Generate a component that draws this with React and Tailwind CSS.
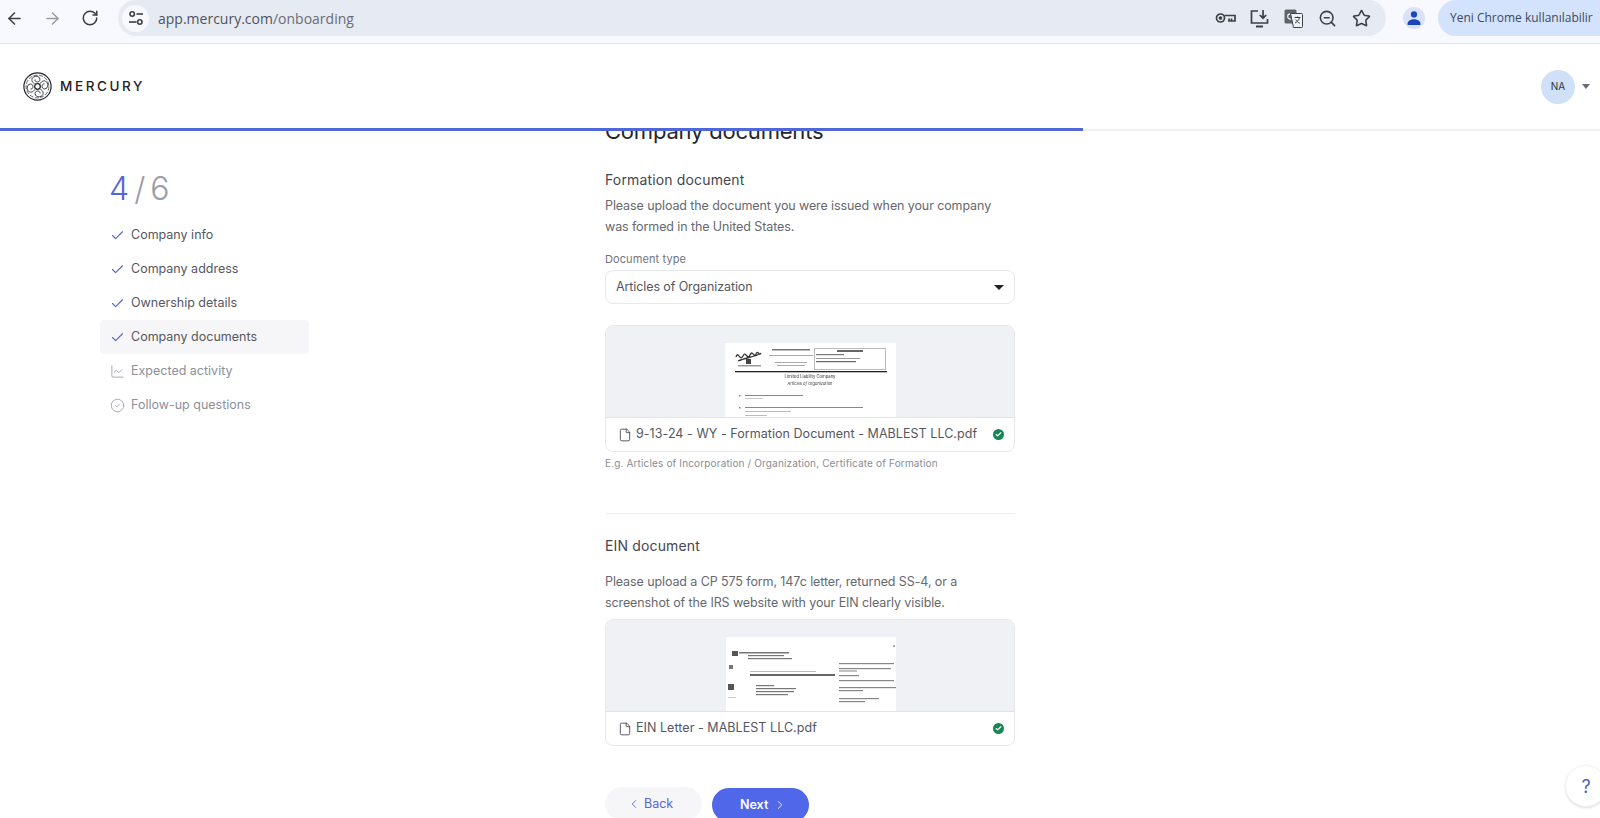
import React from 'react';
import { ArrowLeft, ArrowRight, RotateCw, Star, ZoomOut, Check, ChevronLeft, ChevronRight, File, CircleCheck, ChartLine } from 'lucide-react';

const STEPS = [
    { label: 'Company info', done: true },
    { label: 'Company address', done: true },
    { label: 'Ownership details', done: true },
    { label: 'Company documents', done: true, active: true },
    { label: 'Expected activity', icon: <ChartLine size={15} strokeWidth={1.2} /> },
    { label: 'Follow-up questions', icon: <CircleCheck size={15} strokeWidth={1.2} /> },
];

const TuneIcon = () => (
    <svg width="16" height="16" viewBox="0 0 16 16" fill="none" stroke="#3c4043" strokeWidth="1.6">
        <circle cx="4.2" cy="4" r="2.2" />
        <path d="M8.5 4H15" />
        <circle cx="11.8" cy="12" r="2.2" />
        <path d="M1 12h7.5" />
    </svg>
);

const KeyIcon = () => (
    <svg width="21" height="12" viewBox="0 0 21 12" fill="none" stroke="#3c4043" strokeWidth="1.7">
        <circle cx="5.5" cy="6" r="4" />
        <circle cx="5.5" cy="6" r="1" fill="#3c4043" />
        <path d="M9.5 3.5h10.500V9h-6V6.500M16.500 9V6.500" />
    </svg>
);

const InstallIcon = () => (
    <svg width="19" height="19" viewBox="0 0 19 19" fill="none" stroke="#3c4043" strokeWidth="1.7">
        <path d="M8 2H1.5v12h16V10" />
        <path d="M6 17.5h7" strokeWidth="2" />
        <path d="M13 1v8M9.8 6l3.2 3.2L16.2 6" />
    </svg>
);

const TranslateIcon = () => (
    <svg width="19" height="19" viewBox="0 0 19 19">
        <rect x="0.5" y="0.5" width="12" height="14" rx="1.5" fill="#5f6368" />
        <circle cx="6.3" cy="7.5" r="2.6" fill="none" stroke="#eef1f7" strokeWidth="1.2" />
        <path d="M6.5 4.5h11a1 1 0 0 1 1 1v12a1 1 0 0 1-1 1h-8z" fill="#eef1f7" stroke="#3c4043" strokeWidth="1" />
        <path d="M10.5 8.5h6M13.5 7.5v1M15.5 8.5c-.6 2.5-2.2 4.500-4.500 5.500M11.800 10.500c.8 1.600 2.200 3 4 3.800" fill="none" stroke="#3c4043" strokeWidth="1" />
    </svg>
);

const ProfileIcon = () => (
    <svg width="14" height="14" viewBox="0 0 14 14" fill="#1a47b8">
        <circle cx="7" cy="3.4" r="3.1" />
        <path d="M0.6 14v-1.6C0.6 9.8 4 8.2 7 8.2s6.4 1.6 6.4 4.2V14z" />
    </svg>
);

// Mercury mark: ring filled with looping knots around a center
const MercuryLogo = () => (
    <svg width="29" height="29" viewBox="0 0 29 29" fill="none" stroke="#24262b" strokeWidth="0.9">
        <circle cx="14.5" cy="14.5" r="13.6" strokeWidth="1.2" />
        <circle cx="14.5" cy="14.5" r="11.4" strokeWidth="0.7" strokeDasharray="4 1.5" />
        <circle cx="14.5" cy="14.5" r="2.8" strokeWidth="1.3" />
        <path d="M11.500 11.500c-3-1-3.500-5-1-6.500s5-1 6 1 0 4-2 4-3-1.500-2.500-2.500" />
        <path d="M17.500 11.500c1-3 5-3.500 6.500-1s1 5-1 6-4 0-4-2 1.500-3 2.500-2.500" />
        <path d="M17.500 17.500c3 1 3.500 5 1 6.500s-5 1-6-1 0-4 2-4 3 1.500 2.500 2.500" />
        <path d="M11.500 17.500c-1 3-5 3.500-6.500 1s-1-5 1-6 4 0 4 2-1.500 3-2.500 2.500" />
    </svg>
);

const FormationThumb = () => (
    <svg width="171" height="74" viewBox="0 0 171 74" className="block blur-[0.4px]">
        <rect width="171" height="74" fill="#fff" />
        <path d="M11 14c2-7 4 5 7-1s4 5 7-1 4 4 6-1 3 3 5-1M13 18c7-3 15-4 22-7" fill="none" stroke="#333" strokeWidth="1.300" />
        <rect x="21" y="16" width="5" height="5" fill="#444" />
        <rect x="13" y="22" width="23" height="1.500" fill="#999" />
        <g fill="#aaa">
            <rect x="47" y="6" width="38" height="1.500" fill="#777" />
            <rect x="44" y="12" width="44" height="1" />
            <rect x="50" y="19" width="32" height="1" />
            <rect x="52" y="22" width="28" height="1" />
        </g>
        <rect x="89.500" y="5.500" width="71" height="21" fill="none" stroke="#bbb" />
        <rect x="112" y="7" width="26" height="2" fill="#666" />
        <rect x="91" y="11" width="28" height="1.200" fill="#777" />
        <rect x="91" y="15" width="44" height="1" fill="#999" />
        <rect x="91" y="18" width="40" height="1.200" fill="#666" />
        <rect x="10" y="28" width="152" height="1.300" fill="#222" />
        <text x="85" y="35" textAnchor="middle" fontSize="4.200" fontFamily="Inter, sans-serif" fill="#333">Limited Liability Company</text>
        <text x="85" y="42" textAnchor="middle" fontSize="4" fontFamily="Inter, sans-serif" fontStyle="italic" fill="#333">Articles of Organization</text>
        <g fill="#888">
            <rect x="14" y="52" width="1.500" height="1.500" />
            <rect x="20" y="52" width="58" height="1" />
            <rect x="20" y="55" width="18" height="1" fill="#ccc" />
            <rect x="14" y="64" width="1.500" height="1.500" />
            <rect x="20" y="64" width="118" height="1" />
            <rect x="20" y="68" width="46" height="1" fill="#bbb" />
            <rect x="20" y="72" width="22" height="1" fill="#bbb" />
        </g>
    </svg>
);

const EinThumb = () => (
    <svg width="170" height="74" viewBox="0 0 170 74" className="block blur-[0.4px]">
        <rect width="170" height="74" fill="#fff" />
        <rect x="6" y="14" width="6" height="5" fill="#555" />
        <g fill="#777">
            <rect x="13" y="15" width="50" height="1.500" />
            <rect x="22" y="18" width="36" height="1.200" />
            <rect x="22" y="21" width="44" height="1.200" />
            <rect x="3" y="28" width="4" height="4" />
            <rect x="24" y="34" width="66" height="1" fill="#bbb" />
            <rect x="24" y="37" width="85" height="2" fill="#666" />
            <rect x="2" y="47" width="6" height="6" fill="#555" />
            <rect x="30" y="48" width="18" height="1.200" />
            <rect x="30" y="51" width="40" height="1.200" />
            <rect x="30" y="54" width="38" height="1.200" />
            <rect x="30" y="57" width="32" height="1.200" />
            <rect x="2" y="60" width="8" height="1" fill="#ccc" />
        </g>
        <g fill="#888">
            <rect x="113" y="26" width="55" height="1.200" />
            <rect x="113" y="31" width="52" height="1.200" />
            <rect x="113" y="33.500" width="18" height="1" />
            <rect x="113" y="38" width="20" height="1.200" />
            <rect x="113" y="43" width="55" height="1.200" />
            <rect x="113" y="50" width="57" height="1.200" />
            <rect x="113" y="53" width="24" height="1.200" />
            <rect x="113" y="61" width="40" height="1.200" />
            <rect x="113" y="64" width="26" height="1.200" />
            <rect x="167" y="8" width="2" height="2" fill="#aaa" />
        </g>
    </svg>
);

const FileCard = ({ name, thumb }) => (
    <div className="rounded-lg border border-[#e7e8ee] bg-white overflow-hidden">
        <div className="h-[92px] bg-[#f0f1f4] border-b border-[#e2e3e8] flex justify-center items-end pl-[1px] overflow-hidden">
            {thumb}
        </div>
        <div className="h-[33px] flex items-center pl-[12px] pr-[10px]">
            <File size={14} strokeWidth={1.5} className="shrink-0 text-[#45474f]" />
            <span className="ml-[4px] flex-1 text-[12.5px] tracking-[0.05px] text-[#55575f] whitespace-nowrap">{name}</span>
            <span className="w-[11px] h-[11px] shrink-0 rounded-full bg-[#188554] flex items-center justify-center">
                <Check size={7} strokeWidth={4} className="text-white" />
            </span>
        </div>
    </div>
);

const ToolbarSlot = ({ children }) => (
    <div className="w-[34px] flex items-center justify-center">{children}</div>
);

const App = () => {
    return (
        <div className="h-screen w-full flex flex-col overflow-hidden bg-white font-['Inter',sans-serif]">
            {/* Browser toolbar */}
            <div className="h-[44px] shrink-0 bg-[#f8f9fe] border-b border-[#e3e4ea] flex items-start">
                <div className="h-[36px] w-[118px] flex items-center pl-[5px] gap-[19px] text-[#3c4043]">
                    <ArrowLeft size={19} strokeWidth={2} />
                    <ArrowRight size={19} strokeWidth={2} className="text-[#9a9ca3]" />
                    <RotateCw size={18} strokeWidth={2} />
                </div>
                <div className="h-[36px] w-[1268px] rounded-[18px] bg-[#e6eaf3] flex items-center pl-[4px] pr-[8px]">
                    <div className="w-[27px] h-[27px] rounded-full bg-[#f8f9fe] flex items-center justify-center">
                        <TuneIcon />
                    </div>
                    <span className="ml-[9px] flex-1 text-[14px] text-[#50535a] font-['Open_Sans',sans-serif]">
                        app.mercury.com<span className="text-[#6a6d74]">/onboarding</span>
                    </span>
                    <div className="flex items-center text-[#3c4043]">
                        <ToolbarSlot><KeyIcon /></ToolbarSlot>
                        <ToolbarSlot><InstallIcon /></ToolbarSlot>
                        <ToolbarSlot><TranslateIcon /></ToolbarSlot>
                        <ToolbarSlot><ZoomOut size={19} strokeWidth={2} /></ToolbarSlot>
                        <ToolbarSlot><Star size={19} strokeWidth={2} /></ToolbarSlot>
                    </div>
                </div>
                <div className="h-[36px] ml-[17px] w-[22px] flex items-center justify-center">
                    <div className="w-[22px] h-[22px] shrink-0 rounded-full bg-[#d9e2f8] flex items-center justify-center">
                        <ProfileIcon />
                    </div>
                </div>
                <div className="h-[36px] flex-1 ml-[13px] rounded-l-[18px] bg-[#d3e3fd] flex items-center pl-[12px] text-[12px] text-[#3f4a5e] whitespace-nowrap font-['Open_Sans',sans-serif]">
                    Yeni Chrome kullanılabilir
                </div>
            </div>

            {/* App header */}
            <header className="relative h-[87px] shrink-0 border-b-2 border-[#f0f0f4] flex items-center justify-between pl-[23px] pr-[10px]">
                <div className="flex items-center gap-[8px]">
                    <MercuryLogo />
                    <span className="text-[13.5px] font-medium tracking-[2.6px] text-[#1f2126]">MERCURY</span>
                </div>
                <div className="flex items-center gap-[7px]">
                    <div className="w-[34px] h-[34px] rounded-full bg-[#cfe0f8] flex items-center justify-center text-[10px] text-[#34363c]">NA</div>
                    <div className="w-0 h-0 border-x-[4px] border-x-transparent border-t-[5px] border-t-[#6b6d75]" />
                </div>
                <div className="absolute left-0 bottom-[-2px] w-[1083px] h-[3px] bg-[#4f67d8]" />
            </header>

            <main className="flex-1 flex overflow-hidden">
                {/* Step sidebar */}
                <aside className="w-[605px] shrink-0 pl-[100px] pt-[37px]">
                    <div className="pl-[9px] text-[32px] leading-[42px] tracking-[-2px] text-[#9a9ca6] font-light">
                        <span className="text-[#5266d6]">4</span> / 6
                    </div>
                    <div className="mt-[8px] w-[209px]">
                        {STEPS.map((step) => (
                            <div
                                key={step.label}
                                className={`h-[34px] flex items-center pl-[10px] rounded ${step.active ? 'bg-[#f6f6f9]' : ''} ${step.done ? 'text-[#55575f]' : 'text-[#8d8f99]'}`}
                            >
                                <span className={`w-[15px] flex justify-center ${step.done ? 'text-[#5266d6]' : 'text-[#8d8f99]'}`}>
                                    {step.icon || <Check size={15} strokeWidth={1.8} />}
                                </span>
                                <span className="ml-[6px] text-[12.5px]">{step.label}</span>
                            </div>
                        ))}
                    </div>
                </aside>

                {/* Form column, scrolled so the heading sits under the header */}
                <section className="w-[410px] shrink-0 -mt-[16px]">
                    <h1 className="text-[22px] leading-[32px] tracking-[-0.2px] text-[#24262b] whitespace-nowrap">Company documents</h1>
                    <h2 className="mt-[23px] text-[14px] leading-[20px] tracking-[0.15px] text-[#44464e]">Formation document</h2>
                    <p className="mt-[5px] text-[12.5px] leading-[21px] tracking-[-0.1px] text-[#66686f]">
                        Please upload the document you were issued when your company was formed in the United States.
                    </p>
                    <div className="mt-[14px] text-[11px] leading-[16px] tracking-[0.1px] text-[#72747c]">Document type</div>
                    <div className="mt-[3px] h-[34px] rounded-lg border border-[#e7e8ee] flex items-center justify-between pl-[10px] pr-[10px]">
                        <span className="text-[12.5px] tracking-[-0.1px] text-[#55575f]">Articles of Organization</span>
                        <div className="w-0 h-0 border-x-[5px] border-x-transparent border-t-[5px] border-t-[#1f2126]" />
                    </div>
                    <div className="mt-[21px]">
                        <FileCard name="9-13-24 - WY - Formation Document - MABLEST LLC.pdf" thumb={<FormationThumb />} />
                    </div>
                    <div className="mt-[3px] text-[10px] leading-[16px] tracking-[0.15px] text-[#8a8c95]">
                        E.g. Articles of Incorporation / Organization, Certificate of Formation
                    </div>
                    <div className="mt-[42px] h-px bg-[#eeeef2]" />
                    <h2 className="mt-[22px] text-[14px] leading-[20px] tracking-[0.15px] text-[#44464e]">EIN document</h2>
                    <p className="mt-[15px] text-[12.5px] leading-[21px] tracking-[-0.1px] text-[#66686f]">
                        Please upload a CP 575 form, 147c letter, returned SS-4, or a screenshot of the IRS website with your EIN clearly visible.
                    </p>
                    <div className="mt-[6px]">
                        <FileCard name="EIN Letter - MABLEST LLC.pdf" thumb={<EinThumb />} />
                    </div>
                    <div className="mt-[41px] flex items-start gap-[10px]">
                        <button className="w-[97px] h-[34px] rounded-full bg-[#f6f6f9] flex items-center pl-[22px] gap-[3px] text-[12.5px] text-[#5266d6]">
                            <ChevronLeft size={14} strokeWidth={1.5} /> Back
                        </button>
                        <button className="mt-[1px] w-[97px] h-[34px] rounded-full bg-[#4f67e8] flex items-center pl-[28px] gap-[5px] text-[12.5px] font-semibold text-white">
                            Next <ChevronRight size={14} strokeWidth={1.5} />
                        </button>
                    </div>
                </section>
            </main>

            {/* Help bubble */}
            <div className="absolute left-[1565px] top-[765px] w-[42px] h-[42px] rounded-full bg-white border border-[#f2f2f5] shadow-sm flex items-center justify-center text-[18px] text-[#4f5fc8]">
                ?
            </div>
        </div>
    );
};

export default App;
